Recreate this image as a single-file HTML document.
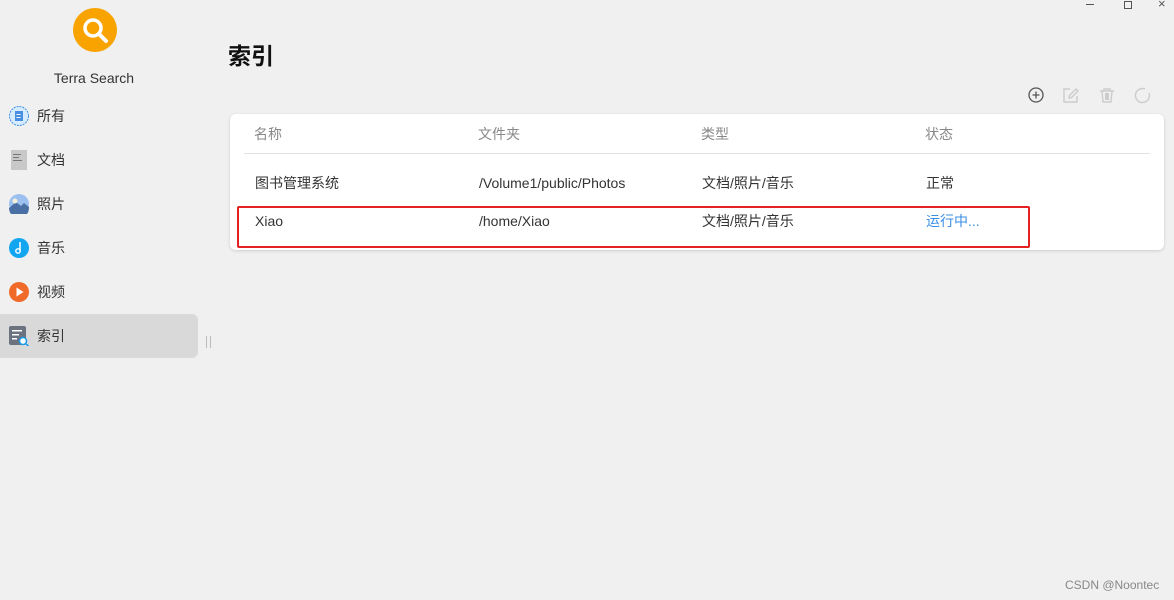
<!DOCTYPE html>
<html><head><meta charset="utf-8"><style>
body{margin:0;width:1174px;height:600px;background:#f0f0f0;font-family:"Liberation Sans","Noto Sans CJK SC",sans-serif;position:relative;overflow:hidden;color:#222}
.a{position:absolute}
.nav{left:0;width:198px;height:44px;display:flex;align-items:center;font-size:14px;color:#333}
.nav .ic{position:absolute;left:9px;top:12px;width:20px;height:20px}
.nav span{position:absolute;left:37px}
.hd{font-size:14px;color:#888}
.c{font-size:14px;color:#333}
</style></head><body>
<div class="a" style="left:73px;top:8px;width:44px;height:44px;border-radius:50%;background:#f9a300"></div>
<svg class="a" style="left:73px;top:8px" width="44" height="44"><circle cx="20" cy="20" r="8" stroke="#fff" stroke-width="3.5" fill="none"/><line x1="26" y1="26" x2="33" y2="33" stroke="#fff" stroke-width="4" stroke-linecap="round"/></svg>
<div class="a" style="left:0;width:188px;top:70px;text-align:center;font-size:14px;color:#333">Terra Search</div>

<div class="a nav" style="top:94px"><svg class="ic" viewBox="0 0 20 20"><circle cx="10" cy="10" r="9.5" fill="#d8ecff" stroke="#3a8ee6" stroke-dasharray="2 1"/><rect x="6" y="5" width="8" height="10" fill="#4a90e2"/><rect x="7.5" y="8" width="4" height="1" fill="#fff"/><rect x="7.5" y="11" width="4" height="1" fill="#fff"/></svg><span>所有</span></div>
<div class="a nav" style="top:138px"><svg class="ic" viewBox="0 0 20 20"><rect x="2" y="0" width="16" height="20" fill="#c8c8c8"/><rect x="4" y="4" width="8" height="1" fill="#777"/><rect x="4" y="7" width="6" height="1" fill="#777"/><rect x="4" y="10" width="9" height="1" fill="#777"/></svg><span>文档</span></div>
<div class="a nav" style="top:182px"><svg class="ic" viewBox="0 0 20 20"><circle cx="10" cy="10" r="10" fill="#9cc1f0"/><path d="M0 14 L7 8 L12 12 L15 9 L20 13 L20 14 A10 10 0 0 1 0 14Z" fill="#4a6fa5"/><circle cx="6" cy="7" r="2.5" fill="#f5f0d8"/></svg><span>照片</span></div>
<div class="a nav" style="top:226px"><svg class="ic" viewBox="0 0 20 20"><circle cx="10" cy="10" r="10" fill="#12a6f0"/><path d="M11 4 V13" stroke="#fff" stroke-width="1.5"/><circle cx="9" cy="13" r="2.2" stroke="#fff" fill="none" stroke-width="1.4"/></svg><span>音乐</span></div>
<div class="a nav" style="top:270px"><svg class="ic" viewBox="0 0 20 20"><circle cx="10" cy="10" r="10" fill="#f06a2a"/><path d="M7.5 5.5 L14.5 10 L7.5 14.5Z" fill="#fff"/></svg><span>视频</span></div>
<div class="a nav" style="top:314px;background:#d9d9d9;border-radius:0 6px 6px 0"><svg class="ic" viewBox="0 0 20 20"><rect x="0" y="0" width="17" height="19" rx="2" fill="#6b7280"/><rect x="3" y="4" width="10" height="1.5" fill="#fff"/><rect x="3" y="8" width="7" height="1.5" fill="#fff"/><rect x="3" y="12" width="5" height="1.5" fill="#fff"/><circle cx="14" cy="15" r="3.5" fill="#fff" stroke="#1e9be8" stroke-width="1.5"/><line x1="16.5" y1="17.5" x2="19.5" y2="20" stroke="#1e9be8" stroke-width="1.5"/></svg><span>索引</span></div>
<div class="a" style="left:206px;top:336px;width:3px;height:12px;border-left:1px solid #bbb;border-right:1px solid #bbb"></div>

<div class="a" style="left:1086px;top:4px;width:8px;height:1px;background:#555"></div>
<div class="a" style="left:1124px;top:1px;width:6px;height:6px;border:1px solid #555"></div>
<div class="a" style="left:1158px;top:-4px;font-size:13px;color:#555">×</div>

<div class="a" style="left:228px;top:37px;font-size:23px;font-weight:bold;color:#111">索引</div>

<svg class="a" style="left:1026px;top:86px" width="20" height="20"><circle cx="10" cy="9" r="7" fill="none" stroke="#555" stroke-width="1.3"/><path d="M10 5.5V12.5M6.5 9H13.5" stroke="#555" stroke-width="1.3"/></svg>
<svg class="a" style="left:1061px;top:86px" width="20" height="20"><path d="M9 3H3V16H16V10" fill="none" stroke="#ccc" stroke-width="1.4"/><path d="M8 12L8.5 9.5L15 3L17 5L10.5 11.5Z" fill="none" stroke="#ccc" stroke-width="1.4"/></svg>
<svg class="a" style="left:1097px;top:86px" width="20" height="20"><path d="M3 5H17M7 5V3H13V5M5 5L6 16H14L15 5" fill="none" stroke="#ccc" stroke-width="1.4"/><rect x="8" y="7" width="4" height="7" fill="#ccc"/></svg>
<svg class="a" style="left:1133px;top:86px" width="20" height="20"><path d="M12 3A7 7 0 1 0 16 7" fill="none" stroke="#ccc" stroke-width="1.4"/></svg>

<div class="a" style="left:230px;top:114px;width:934px;height:136px;background:#fff;border-radius:6px;box-shadow:0 1px 3px rgba(0,0,0,.15)"></div>
<div class="a" style="left:244px;top:153px;width:906px;height:1px;background:#e3e3e3"></div>
<div class="a hd" style="left:254px;top:124px">名称</div>
<div class="a hd" style="left:478px;top:124px">文件夹</div>
<div class="a hd" style="left:701px;top:124px">类型</div>
<div class="a hd" style="left:925px;top:124px">状态</div>
<div class="a c" style="left:255px;top:173px">图书管理系统</div>
<div class="a c" style="left:479px;top:175px">/Volume1/public/Photos</div>
<div class="a c" style="left:702px;top:173px">文档/照片/音乐</div>
<div class="a c" style="left:926px;top:173px">正常</div>
<div class="a c" style="left:255px;top:213px">Xiao</div>
<div class="a c" style="left:479px;top:213px">/home/Xiao</div>
<div class="a c" style="left:702px;top:211px">文档/照片/音乐</div>
<div class="a c" style="left:926px;top:211px;color:#3a8ee6">运行中...</div>
<div class="a" style="left:237px;top:206px;width:789px;height:38px;border:2px solid #e52222;border-radius:2px"></div>

<div class="a" style="left:1065px;top:578px;font-size:12px;color:#888">CSDN @Noontec</div>
</body></html>
